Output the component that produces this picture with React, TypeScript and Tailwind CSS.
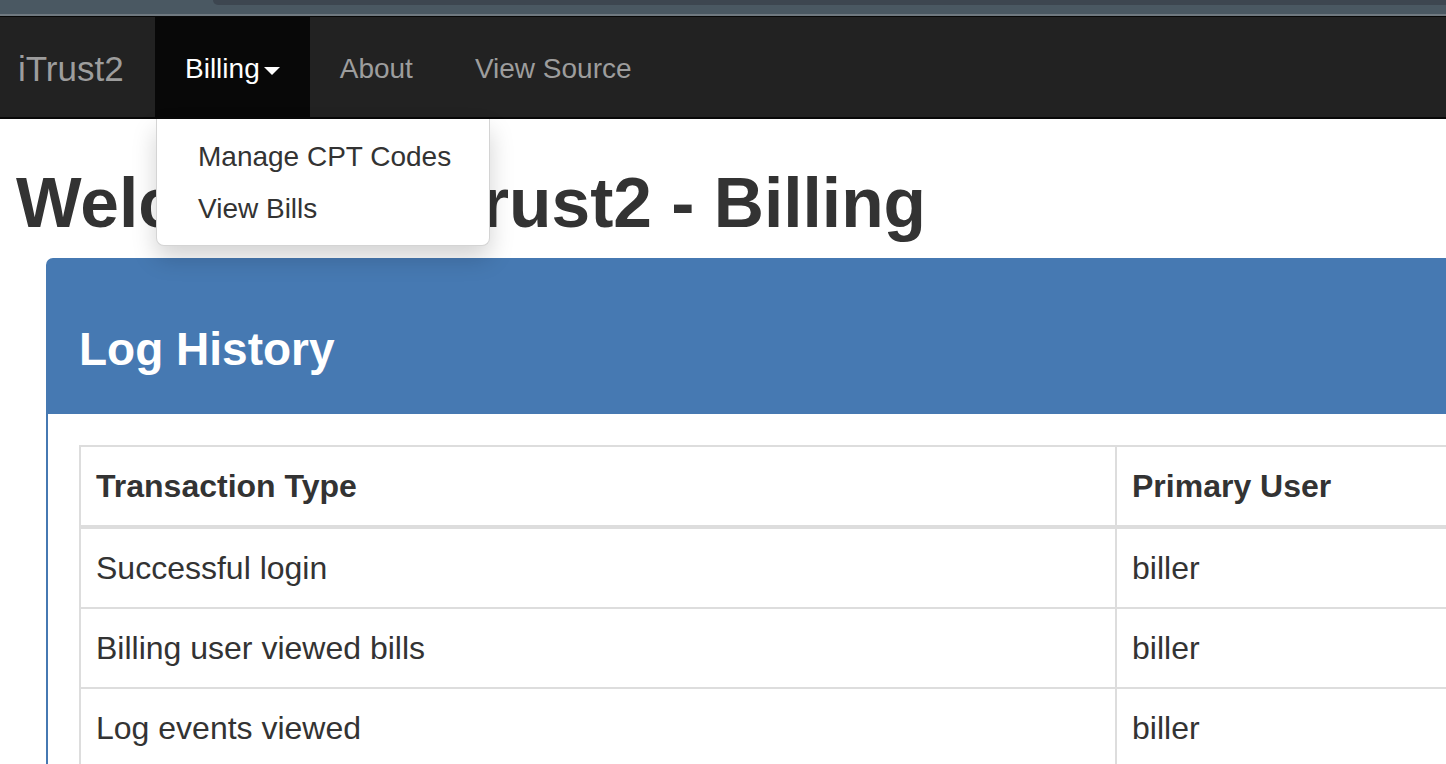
export default function App() {
  const rows = [
    { type: "Successful login", user: "biller" },
    { type: "Billing user viewed bills", user: "biller" },
    { type: "Log events viewed", user: "biller" },
  ];

  return (
    <div className="relative h-[764px] w-[1446px] overflow-hidden bg-white font-['Liberation_Sans',Arial,sans-serif] text-[#333]">
      {/* window chrome strip */}
      <div className="flex h-[14px] bg-[#4a5862]">
        <div className="w-[213px]" />
        <div className="h-[5px] flex-1 rounded-bl-[12px] bg-[#3d4650]" />
      </div>
      <div className="h-[2px] bg-[#707980]" />

      <nav className="flex h-[103px] border-t border-b-2 border-[#080808] bg-[#222]">
        <a className="block w-[155px] pb-[28px] pl-[18px] pt-[32px] text-[35px] leading-[40px] text-[#9d9d9d]">
          iTrust2
        </a>
        <ul className="flex">
          <li className="relative bg-[#080808]">
            <a className="flex items-center px-[30px] pb-[28px] pt-[32px] text-[28px] leading-[40px] text-white">
              Billing
              <span className="ml-[4px] mt-[4px] h-0 w-0 border-x-[8px] border-t-[8px] border-x-transparent border-t-white" />
            </a>
            <ul className="absolute left-[1px] top-[102px] z-10 w-[334px] whitespace-nowrap rounded-b-[8px] border border-t-0 border-[#d4d4d4] bg-white pb-[10px] pt-[12px] shadow-[0_12px_24px_rgba(0,0,0,0.175)]">
              <li className="px-[41px] py-[6px] text-[28px] leading-[40px] text-[#333]">
                Manage CPT Codes
              </li>
              <li className="px-[41px] py-[6px] text-[28px] leading-[40px] text-[#333]">
                View Bills
              </li>
            </ul>
          </li>
          <li>
            <a className="block px-[30px] pb-[28px] pt-[32px] text-[28px] leading-[40px] text-[#9d9d9d]">
              About
            </a>
          </li>
          <li>
            <a className="block px-[32px] pb-[28px] pt-[32px] text-[28px] leading-[40px] text-[#9d9d9d]">
              View Source
            </a>
          </li>
        </ul>
      </nav>

      <h1 className="mb-[15px] mt-[44px] pl-[16px] text-[69.5px] font-bold leading-[80px] text-[#333]">
        Welcome to iTrust2 - Billing
      </h1>

      <div className="ml-[46px] w-[1500px] rounded-t-[7px] border-2 border-[#4679b2]">
        <div className="bg-[#4679b2] pb-[42px] pl-[31px] pt-[66px]">
          <h3 className="text-[46px] font-bold leading-[46px] text-white">
            Log History
          </h3>
        </div>
        <div className="pl-[31px] pt-[31px]">
          <table className="w-[1420px] border-separate border-spacing-0 text-[32px] leading-[46px]">
            <thead>
              <tr>
                <th className="w-[1036px] border-b-4 border-l-2 border-t-2 border-[#ddd] px-[15px] py-[16px] text-left font-bold">
                  Transaction Type
                </th>
                <th className="border-b-4 border-l-2 border-t-2 border-[#ddd] px-[15px] py-[16px] text-left font-bold">
                  Primary User
                </th>
              </tr>
            </thead>
            <tbody>
              {rows.map((r) => (
                <tr key={r.type}>
                  <td className="border-b-2 border-l-2 border-[#ddd] px-[15px] py-[16px]">
                    {r.type}
                  </td>
                  <td className="border-b-2 border-l-2 border-[#ddd] px-[15px] py-[16px]">
                    {r.user}
                  </td>
                </tr>
              ))}
            </tbody>
          </table>
        </div>
      </div>
    </div>
  );
}
